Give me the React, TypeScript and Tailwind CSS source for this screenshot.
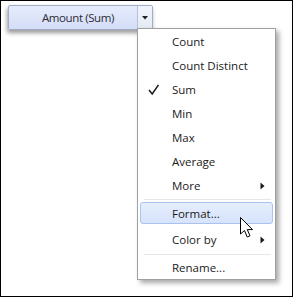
import React from "react";

const font = { fontFamily: '"Open Sans", "Noto Sans", Arial, sans-serif' };

function SubArrow() {
  return (
    <svg width="5" height="8" viewBox="0 0 5 8" className="absolute left-[121px] top-1/2 -translate-y-1/2">
      <path d="M0.5 0.5 L4.5 4 L0.5 7.5 Z" fill="#1a1a1a" />
    </svg>
  );
}

function Item({
  label,
  h,
  sub,
  check,
  highlight,
}: {
  label: string;
  h: string;
  sub?: boolean;
  check?: boolean;
  highlight?: boolean;
}) {
  return (
    <div className={`relative flex items-center ${h}`}>
      {highlight && (
        <div className="absolute left-[1px] right-[1px] top-[1px] bottom-[3px] rounded-[3px] border border-[#a9c3ee] bg-gradient-to-b from-[#e6eefc] to-[#d6e3fb]" />
      )}
      {check && (
        <svg width="12" height="12" viewBox="0 0 12 12" className="absolute left-[9px] top-1/2 -translate-y-1/2">
          <path d="M1 6 L4.2 10 L10.5 0.8" fill="none" stroke="#1a1a1a" strokeWidth="1.5" />
        </svg>
      )}
      <span className="relative pl-[33px] text-[11.5px] text-[#1a1a1a] leading-none">{label}</span>
      {sub && <SubArrow />}
    </div>
  );
}

function Sep() {
  return (
    <div className="h-[3px] flex items-center pl-[5px] pr-[3px]">
      <div className="h-px w-full bg-[#e6e7e7]" />
    </div>
  );
}

export default function App() {
  return (
    <div className="relative w-[293px] h-[297px] border border-black bg-white overflow-hidden" style={font}>
      <div className="ml-[7px] mt-[4px] flex h-[25px] w-[145px] rounded-[2px] border border-[#a3aec6] bg-gradient-to-b from-[#e6ecfc] to-[#d4ddf7] shadow-[-1px_3px_4px_rgba(0,0,0,0.4)]">
        <div className="flex flex-1 items-center justify-end pr-[23px] text-[11.5px] tracking-[-0.4px] text-[#2b2b36]">Amount (Sum)</div>
        <div className="flex w-[15px] items-center justify-center border-l border-[#b8c0d4] bg-gradient-to-b from-[#f0f3fb] to-[#e6eaf5]">
          <svg width="6" height="4" viewBox="0 0 6 4">
            <path d="M0 0 L6 0 L3 3.5 Z" fill="#222" />
          </svg>
        </div>
      </div>

      <div className="absolute left-[136px] top-[27px] w-[139px] h-[252px] border border-[#a0a0a0] bg-white pt-[1px] px-[1px] shadow-[3px_3px_5px_rgba(0,0,0,0.35)]">
        <Item label="Count" h="h-[24px]" />
        <Item label="Count Distinct" h="h-[24px]" />
        <Item label="Sum" h="h-[24px]" check />
        <Item label="Min" h="h-[24px]" />
        <Item label="Max" h="h-[24px]" />
        <Item label="Average" h="h-[24px]" />
        <Item label="More" h="h-[24px]" sub />
        <Sep />
        <Item label="Format..." h="h-[26px]" highlight />
        <Item label="Color by" h="h-[26px]" sub />
        <Sep />
        <Item label="Rename..." h="h-[24px]" />
      </div>

      <svg width="14" height="22" viewBox="0 0 14 22" className="absolute left-[239px] top-[216px]">
        <path
          d="M0.5 0.5 L0.5 17 L4.5 13.5 L7.2 20 L10 18.8 L7.3 12.6 L12.5 12.6 Z"
          fill="#fff"
          stroke="#000"
          strokeWidth="1"
          strokeLinejoin="round"
        />
      </svg>
    </div>
  );
}
